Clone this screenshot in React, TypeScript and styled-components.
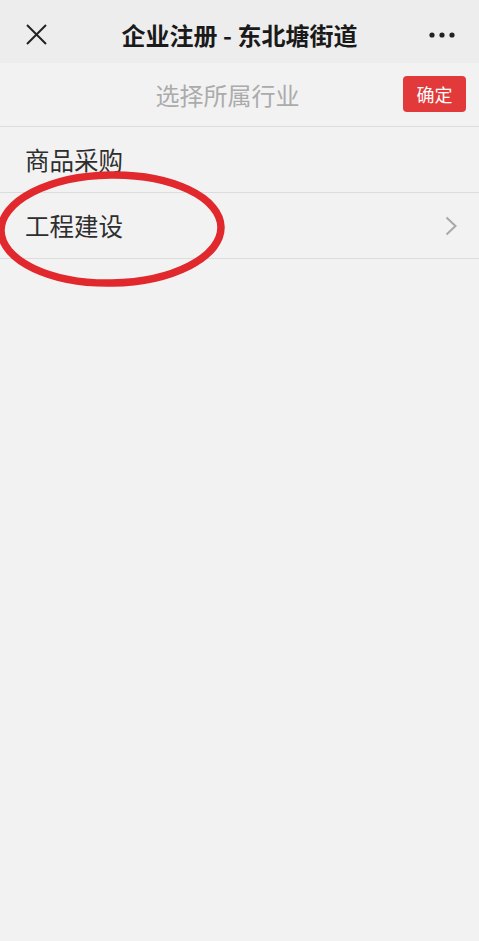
import React from 'react';
import styled, { createGlobalStyle } from 'styled-components';

const GlobalStyle = createGlobalStyle`
    html, body { margin: 0; padding: 0; background: #f2f2f2; }
    body { font-family: "Noto Sans CJK SC", "Noto Sans", sans-serif; }
`;

const Page = styled.div`
    position: relative;
    width: 479px;
    min-height: 941px;
    background: #f2f2f2;
    overflow: hidden;
`;

const TopBar = styled.div`
    height: 63px;
    box-sizing: border-box;
    padding-top: 8px;
    background: #ededed;
    display: grid;
    grid-template-columns: 72px 1fr 72px;
    align-items: center;
`;

const Title = styled.div`
    text-align: center;
    font-size: 24px;
    font-weight: 700;
    color: #1a1a1a;
    padding-bottom: 2px;
`;

const IconCell = styled.div<{ $align: 'start' | 'end' }>`
    display: flex;
    justify-content: ${p => (p.$align === 'start' ? 'flex-start' : 'flex-end')};
    padding: ${p => (p.$align === 'start' ? '0 0 2px 26px' : '0 24px 2px 0')};
`;

const PickerBar = styled.div`
    height: 63px;
    display: flex;
    align-items: center;
    justify-content: center;
    position: relative;
    border-bottom: 1px solid #dcdcdc;
`;

const PickerTitle = styled.div`
    font-size: 24px;
    color: #ababab;
    margin-right: 24px;
`;

const ConfirmButton = styled.button`
    position: absolute;
    right: 13px;
    top: 13px;
    width: 63px;
    height: 36px;
    border: none;
    border-radius: 4px;
    background: #e23a3a;
    color: #fff;
    font-family: inherit;
    font-size: 18px;
    padding: 0;
`;

const Row = styled.div`
    height: 65px;
    display: flex;
    align-items: center;
    justify-content: space-between;
    padding: 0 22px 0 25px;
    border-bottom: 1px solid #dcdcdc;
    font-size: 24.5px;
    color: #2e2e2e;
`;

const Circle = styled.svg`
    position: absolute;
    left: -6px;
    top: 168px;
    pointer-events: none;
`;

const items = [
    { label: '商品采购', arrow: false },
    { label: '工程建设', arrow: true },
];

export default function App() {
    return <Page>
        <GlobalStyle />
        <TopBar>
            <IconCell $align="start">
                <svg width="21" height="21" viewBox="0 0 21 21">
                    <path d="M1 1 L20 20 M20 1 L1 20" stroke="#222" strokeWidth="2" />
                </svg>
            </IconCell>
            <Title>企业注册 - 东北塘街道</Title>
            <IconCell $align="end">
                <svg width="26" height="6" viewBox="0 0 26 6">
                    <circle cx="3" cy="3" r="2.6" fill="#222" />
                    <circle cx="13" cy="3" r="2.6" fill="#222" />
                    <circle cx="23" cy="3" r="2.6" fill="#222" />
                </svg>
            </IconCell>
        </TopBar>

        <PickerBar>
            <PickerTitle>选择所属行业</PickerTitle>
            <ConfirmButton>确定</ConfirmButton>
        </PickerBar>

        {items.map(item => (
            <Row key={item.label}>
                <span>{item.label}</span>
                {item.arrow && (
                    <svg width="12" height="20" viewBox="0 0 12 20">
                        <path d="M1.5 1.5 L10.5 10 L1.5 18.5" fill="none" stroke="#a8a8a8" strokeWidth="2" />
                    </svg>
                )}
            </Row>
        ))}

        {/* hand-drawn red circle around the second option */}
        <Circle width="240" height="125" viewBox="0 0 240 125">
            <ellipse cx="117" cy="61" rx="110" ry="54" fill="none" stroke="#e0282d" strokeWidth="7.5"
                transform="rotate(-1 117 61)" />
        </Circle>
    </Page>;
}
